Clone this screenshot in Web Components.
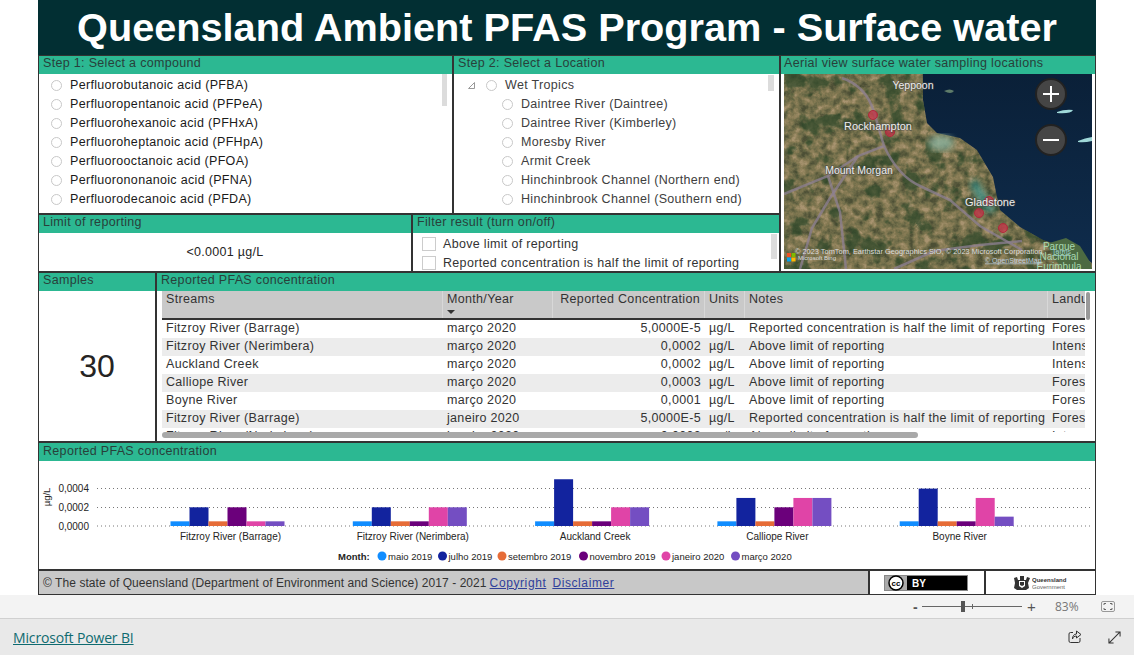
<!doctype html>
<html lang="en">
<head>
<meta charset="utf-8">
<title>Queensland Ambient PFAS Program - Surface water</title>
<style>
  html, body { margin:0; height:100%; background:#fff; font-family:"Liberation Sans",Arial,sans-serif; color:#333; overflow:hidden; }
</style>
</head>
<body>
<pbi-viewer>
  <pfas-report>
    <pfas-title slot="title">Queensland Ambient PFAS Program - Surface water</pfas-title>

    <pfas-panel slot="step1" heading="Step 1: Select a compound" thumb="403,0,5,32">
      <radio-list dark items="Perfluorobutanoic acid (PFBA)|Perfluoropentanoic acid (PFPeA)|Perfluorohexanoic acid (PFHxA)|Perfluoroheptanoic acid (PFHpA)|Perfluorooctanoic acid (PFOA)|Perfluorononanoic acid (PFNA)|Perfluorodecanoic acid (PFDA)"></radio-list>
    </pfas-panel>
    <pfas-panel slot="step2" heading="Step 2: Select a Location" thumb="314,1,6,16">
      <location-tree root="Wet Tropics" items="Daintree River (Daintree)|Daintree River (Kimberley)|Moresby River|Armit Creek|Hinchinbrook Channel (Northern end)|Hinchinbrook Channel (Southern end)"></location-tree>
    </pfas-panel>
    <pfas-panel slot="limit" heading="Limit of reporting"><big-value size="12.5" value="&lt;0.0001 µg/L"></big-value></pfas-panel>
    <pfas-panel slot="filter" heading="Filter result (turn on/off)" thumb="358,1,6,25">
      <check-list items="Above limit of reporting|Reported concentration is half the limit of reporting"></check-list>
    </pfas-panel>
    <pfas-panel slot="map" heading="Aerial view surface water sampling locations" pad="3"><sat-map></sat-map></pfas-panel>

    <pfas-panel slot="samples" heading="Samples"><big-value size="32" value="30"></big-value></pfas-panel>
    <pfas-panel slot="table" heading="Reported PFAS concentration"><pfas-table></pfas-table></pfas-panel>
    <pfas-panel slot="chart" heading="Reported PFAS concentration" top="1"><pfas-chart></pfas-chart></pfas-panel>
    <pfas-footer slot="footer"></pfas-footer>
  </pfas-report>
</pbi-viewer>

<script>
// ---- page shell ----
class PbiViewer extends HTMLElement {
  constructor() {
    super();
    this.attachShadow({ mode: "open" }).innerHTML = `
      <style>
        :host { display:flex; flex-direction:column; height:655px; width:1134px; }
        .page { height:595px; padding-left:38px; }
        .zoom { height:23px; background:#f3f3f3; border-bottom:1px solid #d0d0d0; box-sizing:content-box; display:flex; align-items:center; color:#666; }
        .minus { margin-left:913px; width:9px; font-size:14px; font-weight:bold; color:#555; line-height:1; }
        .track { position:relative; width:100px; height:1px; background:#666; }
        .thumb { position:absolute; left:39px; top:-5px; width:4px; height:11px; background:#555; }
        .tick { position:absolute; left:50px; top:-2px; width:1px; height:5px; background:#666; }
        .plus { width:33px; padding-left:5px; box-sizing:border-box; font-size:15px; color:#555; }
        .pct { width:46px; font:12px "Open Sans",sans-serif; color:#777; }
        .bar { flex:1; background:#e9e9e9; display:flex; align-items:center; padding:0 13px 0 13px; }
        a { font:14px "Open Sans",sans-serif; color:#0f6b70; letter-spacing:-.15px; padding-top:1px; }
        .sp { flex:1; }
        svg { display:block; }
        .share { margin-right:26px; }
      </style>
      <div class="page"><slot></slot></div>
      <div class="zoom">
        <span class="minus">-</span>
        <span class="track"><i class="tick"></i><i class="thumb"></i></span>
        <span class="plus">+</span>
        <span class="pct">83%</span>
        <svg width="14" height="11" viewBox="0 0 14 11" fill="none" stroke="#666"><rect x=".5" y=".5" width="13" height="10" rx="1.5" stroke="#999"/><path d="M3 4V2.500h2M11 4V2.500H9M3 7v1.500h2M11 7v1.500H9"/></svg>
      </div>
      <div class="bar">
        <a href="#">Microsoft Power BI</a>
        <span class="sp"></span>
        <svg class="share" width="14" height="14" viewBox="0 0 14 14" fill="none" stroke="#333" stroke-width="1"><path d="M5 2.500H2.500a1.500 1.500 0 0 0-1.500 1.500v7a1.500 1.500 0 0 0 1.500 1.500h8a1.500 1.500 0 0 0 1.500-1.500V8"/><path d="M8.500 1l4.500 3.500-4.500 3.500V6C6.500 6 5 7 4.500 9c0-3 1.500-5 4-5z"/></svg>
        <svg width="13" height="13" viewBox="0 0 14 14" fill="none" stroke="#333" stroke-width="1.100"><path d="M1 13L13 1M8 1h5v5M1 8v5h5"/></svg>
      </div>`;
  }
}
customElements.define("pbi-viewer", PbiViewer);

class PfasReport extends HTMLElement {
  constructor() {
    super();
    this.attachShadow({ mode: "open" }).innerHTML = `
      <style>
        :host { display:flex; flex-direction:column; width:1058px; height:595px; }
        .top { display:grid; grid-template-columns:742px 316px; height:217px; }
        .left { display:grid; grid-template-rows:159px 58px; }
        .r1 { display:grid; grid-template-columns:415px 327px; }
        .r2 { display:grid; grid-template-columns:374px 368px; }
        .mid { display:grid; grid-template-columns:118px 940px; height:171px; }
        .chart { height:128px; display:grid; }
        .top ::slotted(*), .mid ::slotted(*) { min-width:0; }
      </style>
      <slot name="title"></slot>
      <div class="top">
        <div class="left">
          <div class="r1"><slot name="step1"></slot><slot name="step2"></slot></div>
          <div class="r2"><slot name="limit"></slot><slot name="filter"></slot></div>
        </div>
        <slot name="map"></slot>
      </div>
      <div class="mid"><slot name="samples"></slot><slot name="table"></slot></div>
      <div class="chart"><slot name="chart"></slot></div>
      <slot name="footer"></slot>`;
  }
}
customElements.define("pfas-report", PfasReport);

class PfasTitle extends HTMLElement {
  constructor() {
    super();
    this.attachShadow({ mode: "open" }).innerHTML = `
      <style>
        :host { display:flex; height:55px; align-items:center; justify-content:center; background:#022f33; color:#fff; font-weight:bold; font-size:39.7px; box-sizing:border-box; white-space:nowrap; }
      </style><slot></slot>`;
  }
}
customElements.define("pfas-title", PfasTitle);

// ---- panel: green heading + body, optional scrollbar thumb ----
class PfasPanel extends HTMLElement {
  constructor() {
    super();
    const s = this.attachShadow({ mode: "open" });
    const t = (this.getAttribute("thumb") || "").split(",");
    s.innerHTML = `
      <style>
        :host { display:flex; flex-direction:column; border:1px solid #333; box-sizing:border-box; background:#fff; min-height:0; overflow:hidden; }
        .hd { height:18px; box-sizing:border-box; flex:none; background:#2cb892; color:#28403a; font-size:12.5px; line-height:15px; letter-spacing:.32px; padding:${this.getAttribute("top") || 0}px 0 0 ${this.getAttribute("pad") || 4}px; white-space:nowrap; overflow:hidden; }
        .bd { flex:1; min-height:0; position:relative; overflow:hidden; display:flex; flex-direction:column; }
        .th { position:absolute; background:#dcdcdc; }
      </style>
      <div class="hd">${this.getAttribute("heading") || ""}</div>
      <div class="bd"><slot></slot>${t.length === 4 ? `<i class="th" style="left:${t[0]}px;top:${t[1]}px;width:${t[2]}px;height:${t[3]}px"></i>` : ""}</div>`;
  }
}
customElements.define("pfas-panel", PfasPanel);

// ---- slicers ----
const sharedRow = `
  .row { display:flex; align-items:center; height:19px; white-space:nowrap; font-size:12.5px; letter-spacing:.32px; }
  .dot { width:9px; height:9px; border:1px solid #c8c8c8; border-radius:50%; flex:none; background:#fff; }
`;

class RadioList extends HTMLElement {
  connectedCallback() {
    const items = this.getAttribute("items").split("|");
    this.attachShadow({ mode: "open" }).innerHTML = `
      <style>
        :host { display:block; padding:2px 0 0 12px; color:#1a1a1a; }
        ${sharedRow}
        .dot { margin-right:8px; }
      </style>
      ${items.map((i) => `<div class="row"><i class="dot"></i>${i}</div>`).join("")}`;
  }
}
customElements.define("radio-list", RadioList);

class LocationTree extends HTMLElement {
  connectedCallback() {
    const items = this.getAttribute("items").split("|");
    this.attachShadow({ mode: "open" }).innerHTML = `
      <style>
        :host { display:block; padding-top:2px; color:#404040; }
        ${sharedRow}
        svg { margin-left:13px; width:9px; height:9px; flex:none; }
        .root .dot { margin:0 8px 0 10px; }
        .kid { padding-left:48px; }
        .kid .dot { margin-right:8px; }
      </style>
      <div class="row root"><svg viewBox="0 0 9 9" fill="none" stroke="#999"><path d="M7.500 1.500v6h-6z"/></svg><i class="dot"></i>${this.getAttribute("root")}</div>
      ${items.map((i) => `<div class="row kid"><i class="dot"></i>${i}</div>`).join("")}`;
  }
}
customElements.define("location-tree", LocationTree);

class CheckList extends HTMLElement {
  connectedCallback() {
    const items = this.getAttribute("items").split("|");
    this.attachShadow({ mode: "open" }).innerHTML = `
      <style>
        :host { display:block; padding:2px 0 0 9px; color:#333; }
        ${sharedRow}
        .box { width:12px; height:12px; border:1px solid #ccc; margin-right:7px; flex:none; }
      </style>
      ${items.map((i) => `<div class="row"><i class="box"></i>${i}</div>`).join("")}`;
  }
}
customElements.define("check-list", CheckList);

class BigValue extends HTMLElement {
  connectedCallback() {
    const big = this.getAttribute("size") === "32";
    this.attachShadow({ mode: "open" }).innerHTML = `
      <style>
        :host { display:flex; flex:1; align-items:center; justify-content:center; color:#252423; font-size:${this.getAttribute("size")}px; letter-spacing:${big ? "0" : ".3px"}; padding-top:${big ? 2 : 0}px; }
      </style>${this.getAttribute("value").replace("<", "&lt;")}`;
  }
}
customElements.define("big-value", BigValue);

// ---- satellite map, drawn ----
class SatMap extends HTMLElement {
  constructor() {
    super();
    const pins = [[89,41],[106,58],[205,127],[195,139],[219,154]];
    const land = "M0 0H139V26L143 49L153 59L176 64L193 76L203 93L209 103L213 123L216 136L236 153L259 166L289 176L308 189V195H0Z";
    const label = (x, y, t, size) => `<text x="${x}" y="${y}" font-size="${size || 10.500}" text-anchor="middle" fill="#eee" stroke="#444" stroke-opacity=".55" stroke-width="1.500" paint-order="stroke">${t}</text>`;
    this.attachShadow({ mode: "open" }).innerHTML = `
      <style>
        :host { display:block; padding:0 3px 2px 3px; flex:1; min-height:0; }
        .wrap { position:relative; width:308px; height:195px; overflow:hidden; }
        svg { display:block; font-family:"Liberation Sans",sans-serif; }
        .btn { position:absolute; left:251px; width:28px; height:28px; border-radius:50%; background:#454545; border:2px solid #222; color:#fff; }
        .btn svg { width:28px; height:28px; }
      </style>
      <div class="wrap">
      <svg width="308" height="195" viewBox="0 0 308 195">
        <defs>
          <filter id="ter" x="0" y="0" width="100%" height="100%" color-interpolation-filters="sRGB">
            <feTurbulence type="fractalNoise" baseFrequency=".13" numOctaves="4" seed="11"/>
            <feColorMatrix values="1.700 0 0 0 -.35  1.700 0 0 0 -.35  1.700 0 0 0 -.35  0 0 0 0 1"/>
            <feComponentTransfer>
              <feFuncR type="table" tableValues=".30 .37 .44 .51 .58 .66"/>
              <feFuncG type="table" tableValues=".31 .37 .43 .47 .52 .58"/>
              <feFuncB type="table" tableValues=".21 .25 .29 .32 .37 .44"/>
            </feComponentTransfer>
          </filter>
          <filter id="patch" x="0" y="0" width="100%" height="100%" color-interpolation-filters="sRGB">
            <feTurbulence type="fractalNoise" baseFrequency=".05" numOctaves="4" seed="5"/>
            <feColorMatrix values="0 0 0 0 .17  0 0 0 0 .28  0 0 0 0 .16  7 0 0 0 -3.800"/>
          </filter>
          <filter id="soft"><feGaussianBlur stdDeviation="3"/></filter>
          <filter id="soft1"><feGaussianBlur stdDeviation=".6"/></filter>
          <linearGradient id="sea" x1="0" y1="0" x2="0" y2="1"><stop offset="0" stop-color="#0a2038"/><stop offset="1" stop-color="#0f2c4c"/></linearGradient>
          <clipPath id="lc"><path d="${land}"/></clipPath>
        </defs>
        <rect width="308" height="195" fill="url(#sea)"/>
        <rect width="308" height="195" filter="url(#ter)" clip-path="url(#lc)"/>
        <rect width="308" height="195" filter="url(#patch)" clip-path="url(#lc)" opacity=".7"/>
        <ellipse cx="157" cy="69" rx="13" ry="8" fill="#8fb8a4" opacity=".75" filter="url(#soft)"/>
        <path d="M192 105q8 12 20 32l-8 2q-14-16-18-30z" fill="#2f8f8a" opacity=".75" filter="url(#soft)"/>
        <path d="M262 170l20-6 14 8 10 16 2 7h-30z" fill="#4c6a42"/>
        <path d="M273 38q8-3 16-2-2 4-16 3zM294 67q7-3 14-4v4q-8 2-14 1z" fill="#9fd8d8"/>
        <path d="M160 17q6-3 10 0-3 4-10 0z" fill="#5e7c6a"/>
        <g fill="none" stroke="#8e8093" stroke-width="2.500" stroke-opacity=".75" filter="url(#soft1)">
          <path d="M58 4q24 8 32 34l10 34-26 10-30 20-44 18"/>
          <path d="M100 72q14 30 36 40l30 14 30 26 42 24"/>
          <path d="M74 82l-28 42-18 30-12 41"/>
          <path d="M44 102l12 36 6 57M110 195l40-18 46-6 42-4"/>
        </g>
        ${pins.map(([x, y]) => `<circle cx="${x}" cy="${y}" r="4.500" fill="#c83048" fill-opacity=".72" stroke="#b02a3c"/>`).join("")}
        ${label(129, 15, "Yeppoon")}
        ${label(94, 56, "Rockhampton", 11)}
        ${label(75, 100, "Mount Morgan")}
        ${label(206, 132, "Gladstone", 11)}
        <g font-size="10" fill="#a8d8b0" text-anchor="middle"><text x="275" y="176">Parque</text><text x="275" y="186">Nacional</text><text x="275" y="196">Eurimbula</text></g>
        <g font-size="7.400" fill="#ddd"><text x="11" y="180">© 2023 TomTom, Earthstar Geographics SIO, © 2023 Microsoft Corporation,</text><text x="268" y="180" fill="#9cc" text-decoration="underline" font-size="7">Terms</text>
        <text x="201" y="188.500" fill="#bcd" text-decoration="underline" font-size="7">© OpenStreetMap</text><text x="14" y="185.500" font-size="6">Microsoft Bing</text></g>
        <g><rect x="3" y="179" width="4" height="4" fill="#f25022"/><rect x="7.500" y="179" width="4" height="4" fill="#7fba00"/><rect x="3" y="183.500" width="4" height="4" fill="#00a4ef"/><rect x="7.500" y="183.500" width="4" height="4" fill="#ffb900"/></g>
      </svg>
      <div class="btn" style="top:4px"><svg viewBox="0 0 28 28" stroke="#fff" stroke-width="2"><path d="M14 6v16M6 14h16"/></svg></div>
      <div class="btn" style="top:50px"><svg viewBox="0 0 28 28" stroke="#fff" stroke-width="2"><path d="M6 14h16"/></svg></div>
      </div>`;
  }
}
customElements.define("sat-map", SatMap);

// ---- table ----
const HALF = "Reported concentration is half the limit of reporting";
const ABOVE = "Above limit of reporting";
const TABLE_ROWS = [
  ["Fitzroy River (Barrage)", "março 2020", "5,0000E-5", HALF, "Forestry"],
  ["Fitzroy River (Nerimbera)", "março 2020", "0,0002", ABOVE, "Intensive uses"],
  ["Auckland Creek", "março 2020", "0,0002", ABOVE, "Intensive uses"],
  ["Calliope River", "março 2020", "0,0003", ABOVE, "Forestry"],
  ["Boyne River", "março 2020", "0,0001", ABOVE, "Forestry"],
  ["Fitzroy River (Barrage)", "janeiro 2020", "5,0000E-5", HALF, "Forestry"],
  ["Fitzroy River (Nerimbera)", "janeiro 2020", "0,0002", ABOVE, "Intensive uses"],
];

class PfasTable extends HTMLElement {
  connectedCallback() {
    const cols = "grid-template-columns:281px 110px 152px 40px 303px 60px";
    this.attachShadow({ mode: "open" }).innerHTML = `
      <style>
        :host { display:block; position:relative; padding:0 0 0 5px; font-size:12.5px; letter-spacing:.32px; color:#333; }
        .clip { width:923px; height:141px; overflow:hidden; }
        .hrow, .row { display:grid; ${cols}; white-space:nowrap; }
        .hrow { height:27px; background:#c9c9c9; border-bottom:2px solid #333; color:#333; }
        .hrow > div { padding:1px 0 0 4px; border-right:1px solid #d8d8d8; position:relative; line-height:15px; }
        .row { height:18px; line-height:16px; }
        .row:nth-child(even) { background:#ececec; }
        .row > div { padding-left:4px; overflow:hidden; }
        .num { text-align:right; padding:0 4px 0 0 !important; }
        .hrow .num { padding:1px 4px 0 0 !important; }
        .sort { position:absolute; left:4px; top:19px; border:4px solid transparent; border-top:4px solid #333; border-bottom:0; }
        .hbar { width:756px; height:6px; border-radius:3px; background:#a9a9a9; }
        .vbar { position:absolute; left:929px; top:1px; width:4px; height:28px; border-radius:2px; background:#999; }
      </style>
      <div class="clip">
        <div class="hrow"><div>Streams</div><div>Month/Year<i class="sort"></i></div><div class="num">Reported Concentration</div><div>Units</div><div>Notes</div><div>Landuse</div></div>
        <div class="body">
        ${TABLE_ROWS.map((r) => `<div class="row"><div>${r[0]}</div><div>${r[1]}</div><div class="num">${r[2]}</div><div>µg/L</div><div>${r[3]}</div><div>${r[4]}</div></div>`).join("")}
        </div>
      </div>
      <div class="hbar"></div>
      <i class="vbar"></i>`;
  }
}
customElements.define("pfas-table", PfasTable);

// ---- bar chart, svg coords are report coords minus the panel origin ----
const SERIES = [
  ["maio 2019", "#118DFF", 382],
  ["julho 2019", "#12239E", 442.500],
  ["setembro 2019", "#E66C37", 502],
  ["novembro 2019", "#6B007B", 583.500],
  ["janeiro 2020", "#E044A7", 666],
  ["março 2020", "#744EC2", 735.500],
];
const GROUPS = [
  ["Fitzroy River (Barrage)", [.5, 2, .5, 2, .5, .5]],
  ["Fitzroy River (Nerimbera)", [.5, 2, .5, .5, 2, 2]],
  ["Auckland Creek", [.5, 5, .5, .5, 2, 2]],
  ["Calliope River", [.5, 3, .5, 2, 3, 3]],
  ["Boyne River", [.5, 4, .5, .5, 3, 1]],
];

class PfasChart extends HTMLElement {
  connectedCallback() {
    const ox = 39, oy = 461, base = 526 - oy, unit = 9.350, bw = 19;
    const grid = [["0,0004", 488.500], ["0,0002", 507.500], ["0,0000", 526]].map(([t, y]) => `
      <text x="${89 - ox}" y="${y - oy + 3.500}" text-anchor="end">${t}</text>
      <line x1="${97 - ox}" x2="${1090 - ox}" y1="${y - oy}" y2="${y - oy}" stroke="#777" stroke-dasharray="1 3"/>`).join("");
    const bars = GROUPS.map(([name, vals], g) => {
      const gx = 170.500 + g * 182.300 - ox;
      return vals.map((v, i) => `<rect x="${gx + i * bw}" y="${base - v * unit}" width="${bw}" height="${v * unit}" fill="${SERIES[i][1]}"/>`).join("")
        + `<text x="${gx + 60}" y="${536 - oy + 3.500}" text-anchor="middle">${name}</text>`;
    }).join("");
    const legend = SERIES.map(([t, c, x]) => `
      <circle cx="${x - ox}" cy="${556 - oy}" r="4.500" fill="${c}"/>
      <text x="${x - ox + 6}" y="${556 - oy + 3.500}" font-size="9.500">${t}</text>`).join("");
    this.attachShadow({ mode: "open" }).innerHTML = `
      <style>
        :host { display:block; flex:1; }
        svg { display:block; font-family:"Liberation Sans",sans-serif; font-size:10px; fill:#252423; }
      </style>
      <svg width="1056" height="108" viewBox="0 0 1056 108">
        <text transform="translate(11 36) rotate(-90)" text-anchor="middle" font-size="9.500">µg/L</text>
        ${grid}${bars}
        <text x="${338 - ox}" y="${556 - oy + 3.500}" font-size="9.500" font-weight="bold">Month:</text>
        ${legend}
      </svg>`;
  }
}
customElements.define("pfas-chart", PfasChart);

// ---- footer strip with licence and crest ----
class PfasFooter extends HTMLElement {
  constructor() {
    super();
    this.attachShadow({ mode: "open" }).innerHTML = `
      <style>
        :host { display:grid; grid-template-columns:829px 116px 111px; height:25px; box-sizing:border-box; border:1px solid #333; font-size:12px; color:#333; }
        .txt { background:#c8c8c8; display:flex; align-items:center; padding-left:4px; white-space:pre; letter-spacing:.07px; }
        a { color:#30409a; margin-left:3px; letter-spacing:.6px; }
        a + a { margin-left:6px; }
        .logo { display:flex; align-items:center; justify-content:center; border-left:2px solid #333; background:#fff; }
        .cc svg { margin-right:3px; }
        svg { display:block; font-family:"Liberation Sans",sans-serif; }
      </style>
      <div class="txt">© The state of Queensland (Department of Environment and Science) 2017 - 2021<a href="#">Copyright</a><a href="#">Disclaimer</a></div>
      <div class="logo cc">
        <svg width="84" height="16" viewBox="0 0 84 16">
          <rect width="84" height="16" fill="#888"/><rect x="1" y="1" width="82" height="14" fill="#000"/><rect x="1" y="1" width="22" height="14" fill="#aaa"/>
          <circle cx="12" cy="8" r="7" fill="#fff" stroke="#000" stroke-width="1.500"/>
          <text x="12" y="11" font-size="8" font-weight="bold" text-anchor="middle" fill="#000">cc</text>
          <text x="28" y="12" font-size="10" font-weight="bold" fill="#fff">BY</text>
        </svg>
      </div>
      <div class="logo" style="gap:1px">
        <svg width="18" height="16" viewBox="0 0 18 16" fill="#333">
          <path d="M1 3l3-1 1 3h2V1h4v4h2l1-3 3 1-2 5 1 5-3 2H4l-3-2 1-5z"/><path d="M6 6h6v5l-3 2-3-2z" fill="#fff"/><path d="M7 7h4v3l-2 1-2-1z"/>
        </svg>
        <svg width="36" height="16" viewBox="0 0 36 16"><text x="0" y="7" font-size="6" font-weight="bold" fill="#333">Queensland</text><text x="0" y="14" font-size="6" fill="#666">Government</text></svg>
      </div>`;
  }
}
customElements.define("pfas-footer", PfasFooter);
</script>
</body>
</html>
